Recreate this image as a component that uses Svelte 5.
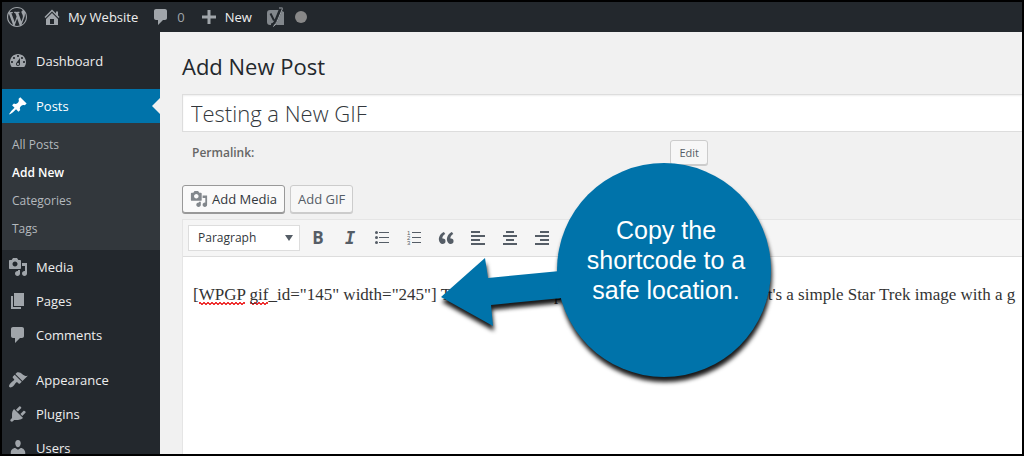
<script lang="ts">
  type MenuItem = { label: string; icon: string; gap?: boolean; children?: string[] };

  const icons: Record<string, string> = {
    wordpress:
      "M20 10c0-5.51-4.49-10-10-10C4.48 0 0 4.49 0 10c0 5.52 4.48 10 10 10 5.51 0 10-4.48 10-10zM7.78 15.37L4.37 6.22c.55-.02 1.17-.08 1.17-.08.5-.06.44-1.13-.06-1.11 0 0-1.45.11-2.37.11-.18 0-.37 0-.58-.01C4.12 2.69 6.87 1.11 10 1.11c2.33 0 4.45.87 6.05 2.34-.68-.11-1.65.39-1.65 1.58 0 .74.45 1.36.9 2.1.35.61.55 1.36.55 2.46 0 1.49-1.4 5-1.4 5l-3.03-8.37c.54-.02.82-.17.82-.17.5-.05.44-1.25-.06-1.22 0 0-1.44.12-2.38.12-.87 0-2.33-.12-2.33-.12-.5-.03-.56 1.2-.06 1.22l.92.08 1.26 3.41zM17.41 10c.24-.64.74-1.87.43-4.25.7 1.29 1.05 2.71 1.05 4.25 0 3.29-1.73 6.24-4.4 7.78.97-2.59 1.94-5.2 2.92-7.78zM6.1 18.09C3.12 16.65 1.11 13.53 1.11 10c0-1.3.23-2.48.72-3.59C3.25 10.3 4.67 14.2 6.1 18.09zm4.03-6.63l2.58 6.98c-.86.29-1.76.45-2.71.45-.79 0-1.57-.11-2.29-.33.81-2.38 1.62-4.74 2.42-7.1z",
    home: "M16 8.5l1.53 1.53-1.06 1.06L10 4.6l-6.47 6.49-1.06-1.06L10 2.5l4 4v-2h2v4zm-6-2.46l6 5.99V18H4v-5.97zM12 17v-5H8v5h4z",
    plus: "M17 8.5v3h-5.5V17h-3v-5.5H3v-3h5.5V3h3v5.5z",
    dashboard:
      "M3.76 16h12.48c1.1-1.37 1.76-3.11 1.76-5 0-4.42-3.58-8-8-8s-8 3.58-8 8c0 1.89.66 3.63 1.76 5zM10 4c.55 0 1 .45 1 1s-.45 1-1 1-1-.45-1-1 .45-1 1-1zM6 6c.55 0 1 .45 1 1s-.45 1-1 1-1-.45-1-1 .45-1 1-1zm8 0c.55 0 1 .45 1 1s-.45 1-1 1-1-.45-1-1 .45-1 1-1zm-5.37 5.55L12 7v6c0 1.1-.9 2-2 2s-2-.9-2-2c0-.57.24-1.08.63-1.45zM4 10c.55 0 1 .45 1 1s-.45 1-1 1-1-.45-1-1 .45-1 1-1zm12 0c.55 0 1 .45 1 1s-.45 1-1 1-1-.45-1-1 .45-1 1-1zm-5 3c0-.55-.45-1-1-1s-1 .45-1 1 .45 1 1 1 1-.45 1-1z",
    posts:
      "M10.44 3.02l1.82-1.82 6.36 6.35-1.83 1.82c-1.05-.68-2.48-.57-3.41.36l-.75.75c-.92.93-1.04 2.35-.35 3.41l-1.83 1.82-2.41-2.41-2.8 2.79c-.42.42-3.38 2.71-3.8 2.29s1.86-3.39 2.28-3.81l2.79-2.79L4.1 9.36l1.83-1.82c1.05.69 2.48.57 3.4-.36l.75-.75c.93-.92 1.05-2.35.36-3.41z",
    media:
      "M13 11V4c0-.55-.45-1-1-1h-1.67L9 1H5L3.67 3H2c-.55 0-1 .45-1 1v7c0 .55.45 1 1 1h10c.55 0 1-.45 1-1zM7 4.5c1.38 0 2.5 1.12 2.5 2.5S8.38 9.5 7 9.5 4.5 8.38 4.5 7 5.62 4.5 7 4.5zM14 6h5v10.5c0 1.38-1.12 2.5-2.5 2.5S14 17.88 14 16.5s1.12-2.5 2.5-2.5c.17 0 .34.02.5.05V9h-3V6zm-4 8.05V13h2v3.5c0 1.38-1.12 2.5-2.5 2.5S7 17.88 7 16.5 8.12 14 9.5 14c.17 0 .34.02.5.05z",
    pages: "M6 15V2h10v13H6zm-1 1h8v2H3V5h2v11z",
    comments:
      "M5 2h9c1.1 0 2 .9 2 2v7c0 1.1-.9 2-2 2h-2l-5 5v-5H5c-1.1 0-2-.9-2-2V4c0-1.1.9-2 2-2z",
    appearance:
      "M14.48 11.06L7.41 3.99l1.5-1.5c.5-.56 2.3-.47 3.51.32 1.21.8 1.43 1.28 2.91 2.1 1.18.64 2.45 1.26 4.45.85zm-.71.71L6.7 4.7 4.93 6.47c-.39.39-.39 1.02 0 1.41l1.06 1.06c.39.39.39 1.03 0 1.42-.6.6-1.43 1.11-2.21 1.69-.35.26-.7.53-1.01.84C1.43 14.23.4 16.08 1.4 17.07c.99 1 2.84-.03 4.18-1.36.31-.31.58-.66.85-1.02.57-.78 1.08-1.61 1.69-2.21.39-.39 1.02-.39 1.41 0l1.06 1.06c.39.39 1.02.39 1.41 0z",
    plugins:
      "M13.11 4.36L9.87 7.6 8 5.73l3.24-3.24c.35-.34 1.05-.2 1.56.32.52.51.66 1.21.31 1.55zm-8 1.77l.91-1.12 9.01 9.01-1.19.84c-.71.71-2.63 1.16-3.82 1.16H6.14L4.9 17.26c-.59.59-1.54.59-2.12 0-.59-.58-.59-1.53 0-2.12l1.24-1.24v-3.88c0-1.13.4-3.19 1.09-3.89zm7.26 3.97l3.24-3.24c.34-.35 1.04-.21 1.55.31.52.51.66 1.21.31 1.55l-3.24 3.25z",
    users:
      "M10 9.25c-2.27 0-2.73-3.44-2.73-3.44C7 4.02 7.82 2 9.97 2c2.16 0 2.98 2.02 2.71 3.81 0 0-.41 3.44-2.68 3.44zm0 2.57L12.72 10c2.39 0 4.52 2.33 4.52 4.53v2.49s-3.65 1.13-7.24 1.13c-3.65 0-7.24-1.13-7.24-1.13v-2.49c0-2.25 1.94-4.48 4.47-4.48z",
    quote:
      "M9.49 13.22c0-.74-.2-1.38-.61-1.9-.62-.78-1.83-.88-2.53-.72-.29-1.65 1.11-3.75 2.92-4.65L7.88 4c-2.73 1.3-5.42 4.28-4.96 8.05C3.21 14.43 4.59 16 6.54 16c.85 0 1.56-.25 2.12-.75s.83-1.18.83-2.03zm8.05 0c0-.74-.2-1.38-.61-1.9-.63-.78-1.83-.88-2.53-.72-.29-1.65 1.11-3.75 2.92-4.65L15.93 4c-2.73 1.3-5.41 4.28-4.95 8.05.29 2.38 1.66 3.95 3.61 3.95.85 0 1.56-.25 2.12-.75s.83-1.18.83-2.03z",
    alignLeft: "M3 3h9v2H3zM3 7h14v2H3zM3 11h9v2H3zM3 15h14v2H3z",
    alignCenter: "M6 3h8v2H6zM3 7h14v2H3zM6 11h8v2H6zM3 15h14v2H3z",
    alignRight: "M8 3h9v2H8zM3 7h14v2H3zM8 11h9v2H8zM3 15h14v2H3z",
  };

  const menu: MenuItem[] = [
    { label: "Dashboard", icon: "dashboard" },
    {
      label: "Posts",
      icon: "posts",
      gap: true,
      children: ["All Posts", "Add New", "Categories", "Tags"],
    },
    { label: "Media", icon: "media" },
    { label: "Pages", icon: "pages" },
    { label: "Comments", icon: "comments" },
    { label: "Appearance", icon: "appearance", gap: true },
    { label: "Plugins", icon: "plugins" },
    { label: "Users", icon: "users" },
  ];

  const aligns = [
    ["alignLeft", "Align left"],
    ["alignCenter", "Align center"],
    ["alignRight", "Align right"],
  ];

  let title = $state("Testing a New GIF");
  let format = $state("Paragraph");
</script>

{#snippet icon(name: string)}
  <svg class="icon" viewBox="0 0 20 20" aria-hidden="true">
    <path d={icons[name]} fill-rule="evenodd" />
  </svg>
{/snippet}

<div class="page">
  <header class="bar">
    <a class="logo" href="#about" aria-label="About WordPress">{@render icon("wordpress")}</a>
    <a class="site" href="#site">{@render icon("home")}My Website</a>
    <a class="pending" href="#comments">{@render icon("comments")}<span>0</span></a>
    <a class="new" href="#new">{@render icon("plus")}New</a>
    <a class="seo" href="#seo" aria-label="SEO">
      <svg viewBox="0 0 20 20" aria-hidden="true">
        <path class="tile" d="M4 3h10L9 18H4a3 3 0 0 1-3-3V6a3 3 0 0 1 3-3zM16 4l2 1v13h-8z" />
        <path class="stem" d="M4.5 6.5l3.5 7M14.5 1L9 14.5q-1.2 3-4 3" />
        <path class="edge" d="M16.5 1.5L10.5 16q-1 2.5-3.500 3.500M13 1h3.500" />
      </svg>
      <span class="score"></span>
    </a>
  </header>

  <div class="body">
    <nav class="menu" aria-label="Main menu">
      {#each menu as item (item.label)}
        <a
          class="item"
          class:gap={item.gap}
          class:current={item.children}
          href="#{item.label.toLowerCase()}">{@render icon(item.icon)}{item.label}</a
        >
        {#if item.children}
          <div class="submenu">
            {#each item.children as child (child)}
              <a class:active={child === "Add New"} href="#{child}">{child}</a>
            {/each}
          </div>
        {/if}
      {/each}
    </nav>

    <main class="content">
      <h1>Add New Post</h1>
      <input class="title" aria-label="Post title" bind:value={title} />
      <div class="permalink">
        <strong>Permalink:</strong>
        <button class="button small">Edit</button>
      </div>
      <div class="media-buttons">
        <button class="button focused">{@render icon("media")}Add Media</button>
        <button class="button muted">Add GIF</button>
      </div>

      <section class="editor">
        <div class="toolbar">
          <div class="format">
            <select aria-label="Format" bind:value={format}>
              <option>Paragraph</option>
              <option>Heading 1</option>
              <option>Heading 2</option>
            </select>
            <svg class="caret" viewBox="0 0 8 6" aria-hidden="true"><path d="M0 0h8L4 6z" /></svg>
          </div>
          <button class="tool bold" aria-label="Bold">B</button>
          <button class="tool italic" aria-label="Italic">I</button>
          <button class="tool" aria-label="Bulleted list">
            <svg class="icon" viewBox="0 0 20 20" aria-hidden="true">
              <path d="M7 4h10v1H7zM7 9h10v1H7zM7 14h10v1H7z" />
              <circle cx="4.5" cy="4.5" r="1.5" />
              <circle cx="4.5" cy="9.5" r="1.5" />
              <circle cx="4.5" cy="14.5" r="1.5" />
            </svg>
          </button>
          <button class="tool" aria-label="Numbered list">
            <svg class="icon digits" viewBox="0 0 20 20" aria-hidden="true">
              <path d="M8 4h9v1H8zM8 9h9v1H8zM8 14h9v1H8z" />
              <text x="3" y="7">1</text>
              <text x="3" y="12">2</text>
              <text x="3" y="17">3</text>
            </svg>
          </button>
          <button class="tool" aria-label="Blockquote">{@render icon("quote")}</button>
          {#each aligns as [name, label] (name)}
            <button class="tool" aria-label={label}>{@render icon(name)}</button>
          {/each}
        </div>
        <div class="text">
          <p>
            <span class="lead"
              >[<span class="typo">WPGP</span> <span class="typo">gif</span>_id="145" width="245"] T</span
            >
            <span class="middle">p</span>
            <span>It's a simple Star Trek image with a g</span>
          </p>
        </div>
      </section>
    </main>
  </div>

  <aside class="callout">
    <svg viewBox="0 0 340 230" aria-hidden="true">
      <path d="M5 137L49 98l3 20 72-7 2 27-71 7 2 21z" />
      <circle cx="228" cy="110" r="107" />
    </svg>
    <p>Copy the shortcode to a safe location.</p>
  </aside>
</div>

<style>
  :global(body) {
    margin: 0;
  }
  .page {
    position: relative;
    display: flex;
    flex-direction: column;
    box-sizing: border-box;
    height: 100vh;
    overflow: hidden;
    border: 2px solid #000;
    background: #f1f1f1;
    color: #32373c;
    font: 13px/20px "Open Sans", "Noto Sans", sans-serif;
  }
  a {
    color: inherit;
    text-decoration: none;
  }
  .icon {
    width: 20px;
    height: 20px;
    flex: none;
    fill: currentColor;
  }

  .bar {
    display: flex;
    flex: none;
    align-items: center;
    height: 30px;
    padding-left: 5px;
    background: #23282d;
    color: #eee;
  }
  .bar a {
    display: flex;
    align-items: center;
    gap: 6px;
  }
  .bar .icon {
    color: #a0a5aa;
  }
  .logo {
    margin-right: 15px;
  }
  .site {
    margin-right: 13px;
  }
  .pending,
  .new {
    margin-right: 14px;
  }
  .pending {
    color: #a0a5aa;
  }
  .seo svg {
    width: 20px;
    height: 20px;
  }
  .tile {
    fill: #82878c;
  }
  .stem,
  .edge {
    fill: none;
    stroke: #23282d;
    stroke-width: 2;
  }
  .edge {
    stroke: #a0a5aa;
    stroke-width: 1;
  }
  .score {
    width: 12px;
    height: 12px;
    margin-left: 3px;
    border-radius: 50%;
    background: #888;
  }

  .body {
    display: flex;
    flex: 1;
    min-height: 0;
  }
  .menu {
    display: flex;
    flex: none;
    flex-direction: column;
    width: 158px;
    padding-top: 12px;
    overflow: hidden;
    background: #23282d;
    color: #eee;
  }
  .item {
    position: relative;
    display: flex;
    flex: none;
    align-items: center;
    gap: 8px;
    height: 34px;
    padding-left: 6px;
  }
  .item .icon {
    color: #a0a5aa;
  }
  .gap {
    margin-top: 11px;
  }
  .current {
    background: #0073aa;
    color: #fff;
  }
  .current .icon {
    color: #fff;
  }
  .current::after {
    content: "";
    position: absolute;
    right: 0;
    border: 8px solid transparent;
    border-right-color: #f1f1f1;
  }
  .submenu {
    flex: none;
    padding: 8px 10px 7px;
    background: #32373c;
    color: #b4b9be;
    font-size: 12px;
    line-height: 28px;
  }
  .submenu a {
    display: block;
  }
  .submenu .active {
    color: #fff;
    font-weight: 600;
  }

  .content {
    display: flex;
    flex: 1;
    flex-direction: column;
    min-width: 0;
    padding: 19px 0 0 22px;
  }
  h1 {
    margin: 0 0 13px;
    color: #23282d;
    font-size: 22px;
    font-weight: 400;
    line-height: 30px;
  }
  .title {
    box-sizing: border-box;
    width: 100%;
    height: 38px;
    padding: 0 8px;
    border: 1px solid #ddd;
    border-right: 0;
    outline: 0;
    background: #fff;
    box-shadow: inset 0 1px 2px rgba(0, 0, 0, 0.07);
    color: #32373c;
    font: 300 22px/30px "Open Sans", "Noto Sans", sans-serif;
  }
  .permalink {
    display: flex;
    align-items: center;
    justify-content: space-between;
    width: 516px;
    padding: 8px 0 0 10px;
    color: #666;
    font-size: 12px;
  }
  .permalink strong {
    font-weight: 600;
  }
  .button {
    display: flex;
    align-items: center;
    height: 28px;
    padding: 0 7px;
    border: 1px solid #ccc;
    border-radius: 3px;
    background: #f7f7f7;
    box-shadow: 0 1px 0 #ccc;
    color: #32373c;
    font: inherit;
    white-space: nowrap;
  }
  .small {
    height: 25px;
    padding: 0 8px;
    color: #555d66;
    font-size: 11px;
  }
  .focused {
    gap: 4px;
    border-color: #999;
    background: #fafafa;
    box-shadow: 0 1px 0 #999;
  }
  .focused .icon {
    width: 18px;
    height: 18px;
    color: #82878c;
  }
  .muted {
    color: #555d66;
  }
  .media-buttons {
    display: flex;
    gap: 5px;
    padding: 20px 0 6px;
  }

  .editor {
    display: flex;
    flex: 1;
    flex-direction: column;
    min-height: 0;
    border: 1px solid #e5e5e5;
    border-width: 1px 0 0 1px;
    background: #fff;
  }
  .toolbar {
    display: flex;
    flex: none;
    align-items: center;
    gap: 12px;
    height: 36px;
    padding-left: 5px;
    border-bottom: 1px solid #ddd;
    background: #f5f5f5;
  }
  .format {
    position: relative;
    margin-right: -4px;
  }
  select {
    display: block;
    box-sizing: border-box;
    width: 112px;
    height: 26px;
    padding: 0 9px;
    border: 1px solid #ddd;
    border-radius: 0;
    appearance: none;
    background: #fff;
    color: #32373c;
    font: 12px/20px "Open Sans", "Noto Sans", sans-serif;
  }
  .caret {
    position: absolute;
    top: 10px;
    right: 7px;
    width: 8px;
    height: 6px;
    fill: #555d66;
    pointer-events: none;
  }
  .tool {
    display: grid;
    place-items: center;
    width: 20px;
    height: 20px;
    padding: 0;
    border: 0;
    background: none;
    color: #555d66;
  }
  .bold {
    font: 700 17px/20px "Open Sans", sans-serif;
  }
  .italic {
    font: italic 700 17px/20px "DejaVu Sans Mono", monospace;
  }
  .digits text {
    font: 6px "Liberation Sans", sans-serif;
  }
  .text {
    padding: 24px 10px;
    overflow: hidden;
    color: #333;
    font: 17px/28px "Liberation Serif", serif;
    white-space: nowrap;
  }
  .text p {
    display: flex;
    margin: 0;
  }
  .lead {
    flex: none;
    width: 361px;
  }
  .middle {
    flex: none;
    width: 208px;
  }
  .typo {
    padding-bottom: 1px;
    background:
      linear-gradient(45deg, transparent 40%, #e33 40%, #e33 60%, transparent 60%) left bottom / 4px
        3px repeat-x,
      linear-gradient(-45deg, transparent 40%, #e33 40%, #e33 60%, transparent 60%) 2px bottom / 4px
        3px repeat-x;
  }

  /* annotation floating over the editor */
  .callout {
    position: absolute;
    top: 158px;
    left: 434px;
    width: 340px;
    height: 230px;
    color: #fff;
    font: 25px/30px "Liberation Sans", Arial, sans-serif;
    text-align: center;
  }
  .callout svg {
    width: 100%;
    height: 100%;
    overflow: visible;
    fill: #0073aa;
    filter: drop-shadow(1px 5px 2px rgba(0, 0, 0, 0.9));
  }
  .callout p {
    position: absolute;
    top: 55px;
    left: 145px;
    width: 170px;
    margin: 0;
  }
</style>
